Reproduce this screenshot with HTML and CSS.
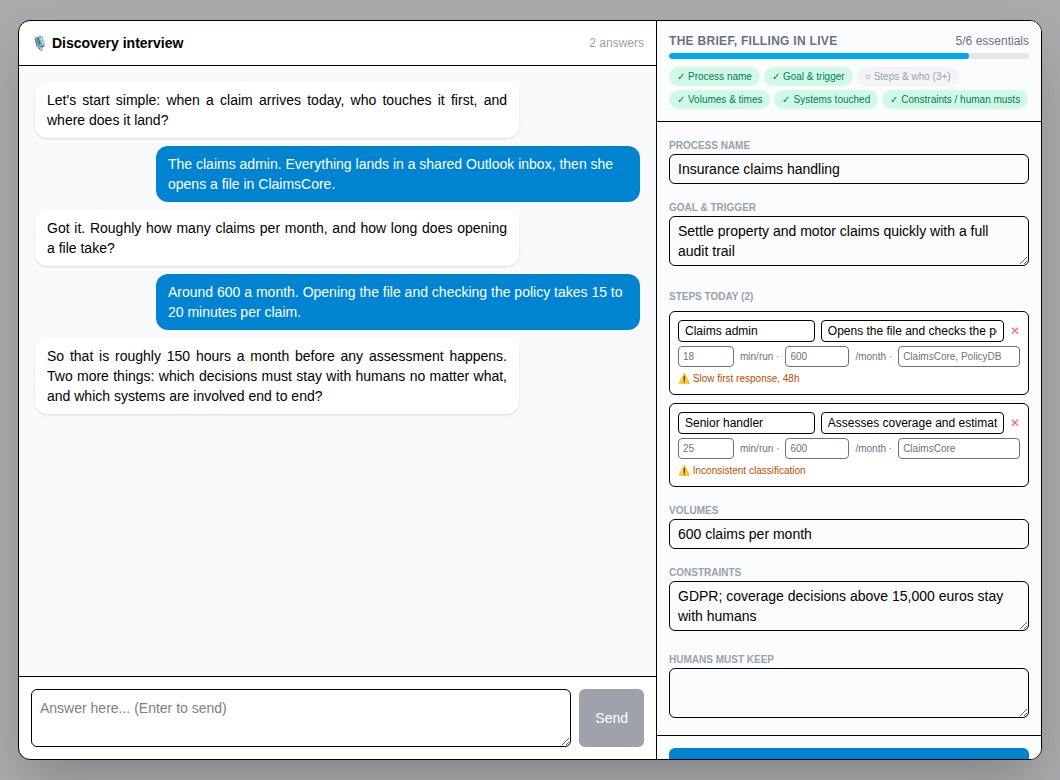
FILE: index.html
```
<!DOCTYPE html>
<html lang="en">
<head>
    <meta charset="UTF-8">
    <meta name="viewport" content="width=device-width, initial-scale=1.0">
    <title>Discovery interview</title>
    <link rel="stylesheet" href="styles.css">
</head>
<body>

<div class="overlay">
    <div class="modal">

        <section class="interview">
            <header class="interview-header">
                <h1>🎙️ Discovery interview</h1>
                <span class="count">2 answers</span>
            </header>

            <div class="chat">
                <p class="bubble bot">Let's start simple: when a claim arrives today, who touches it first, and where does it land?</p>
                <p class="bubble user">The claims admin. Everything lands in a shared Outlook inbox, then she opens a file in ClaimsCore.</p>
                <p class="bubble bot">Got it. Roughly how many claims per month, and how long does opening a file take?</p>
                <p class="bubble user">Around 600 a month. Opening the file and checking the policy takes 15 to 20 minutes per claim.</p>
                <p class="bubble bot">So that is roughly 150 hours a month before any assessment happens. Two more things: which decisions must stay with humans no matter what, and which systems are involved end to end?</p>
            </div>

            <form class="composer">
                <textarea class="field" rows="2" placeholder="Answer here... (Enter to send)" aria-label="Answer"></textarea>
                <button class="send" type="button" disabled>Send</button>
            </form>
        </section>

        <aside class="brief">
            <header class="brief-header">
                <div class="brief-title">
                    <h2>The brief, filling in live</h2>
                    <span>5/6 essentials</span>
                </div>
                <div class="progress"><div class="progress-bar"></div></div>
                <div class="chips">
                    <span class="chip done"><span>✓</span> Process name</span>
                    <span class="chip done"><span>✓</span> Goal &amp; trigger</span>
                    <span class="chip"><span>○</span> Steps &amp; who (3+)</span>
                    <span class="chip done"><span>✓</span> Volumes &amp; times</span>
                    <span class="chip done"><span>✓</span> Systems touched</span>
                    <span class="chip done"><span>✓</span> Constraints / human musts</span>
                </div>
            </header>

            <div class="brief-body">
                <div class="group">
                    <label for="name">Process name</label>
                    <input class="field" id="name" type="text" value="Insurance claims handling">
                </div>
                <div class="group group-area">
                    <label for="goal">Goal &amp; trigger</label>
                    <textarea class="field" id="goal" rows="2">Settle property and motor claims quickly with a full audit trail</textarea>
                </div>

                <div class="steps">
                    <h3>Steps today (2)</h3>
                    <div class="step">
                        <div class="step-row">
                            <input class="step-who" type="text" value="Claims admin" aria-label="Who">
                            <input class="step-what" type="text" value="Opens the file and checks the policy" aria-label="What">
                            <button class="remove" type="button" aria-label="Remove step">✕</button>
                        </div>
                        <div class="step-row meta">
                            <input class="minutes" id="min1" type="text" value="18">
                            <label for="min1">min/run ·</label>
                            <input class="runs" id="runs1" type="text" value="600">
                            <label for="runs1">/month ·</label>
                            <input class="systems" type="text" value="ClaimsCore, PolicyDB" aria-label="Systems">
                        </div>
                        <p class="pain">⚠️ Slow first response, 48h</p>
                    </div>
                    <div class="step">
                        <div class="step-row">
                            <input class="step-who" type="text" value="Senior handler" aria-label="Who">
                            <input class="step-what" type="text" value="Assesses coverage and estimates" aria-label="What">
                            <button class="remove" type="button" aria-label="Remove step">✕</button>
                        </div>
                        <div class="step-row meta">
                            <input class="minutes" id="min2" type="text" value="25">
                            <label for="min2">min/run ·</label>
                            <input class="runs" id="runs2" type="text" value="600">
                            <label for="runs2">/month ·</label>
                            <input class="systems" type="text" value="ClaimsCore" aria-label="Systems">
                        </div>
                        <p class="pain">⚠️ Inconsistent classification</p>
                    </div>
                </div>

                <div class="group">
                    <label for="volumes">Volumes</label>
                    <input class="field" id="volumes" type="text" value="600 claims per month">
                </div>
                <div class="group group-area">
                    <label for="constraints">Constraints</label>
                    <textarea class="field" id="constraints" rows="2">GDPR; coverage decisions above 15,000 euros stay with humans</textarea>
                </div>
                <div class="group group-area">
                    <label for="humans">Humans must keep</label>
                    <textarea class="field" id="humans" rows="2"></textarea>
                </div>
            </div>

            <footer class="brief-footer">
                <button class="primary" type="button" aria-label="Use this brief"></button>
            </footer>
        </aside>

    </div>
</div>

</body>
</html>
```
FILE: styles.css
```
* {
    box-sizing: border-box;
    margin: 0;
    padding: 0;
}
body {
    background: #a9aaab;
    color: #000;
    font-family: "Liberation Sans", Arial, sans-serif;
    font-size: 14px;
    line-height: 20px;
}
input, textarea, button {
    font: inherit;
    color: inherit;
    background: transparent;
    border: 1px solid;
    min-width: 0;
}
button {
    border: 0;
}
::placeholder {
    color: #808080;
}
.overlay {
    height: 100vh;
    padding: 20px 16px;
    display: flex;
    justify-content: center;
}
.modal {
    width: 100%;
    max-width: 1024px;
    display: flex;
    overflow: hidden;
    background: #fff;
    border: 1px solid #000;
    border-radius: 12px;
    box-shadow: 0 25px 50px -12px rgba(0, 0, 0, 0.25);
}

/* interview */
.interview {
    flex: 1;
    min-width: 0;
    display: flex;
    flex-direction: column;
    border-right: 1px solid #000;
}
.interview-header {
    display: flex;
    justify-content: space-between;
    align-items: center;
    padding: 12px;
    border-bottom: 1px solid #000;
}
h1 {
    font-size: 14px;
}
.count {
    font-size: 12px;
    line-height: 16px;
    color: #99a1af;
}
.chat {
    flex: 1;
    min-height: 0;
    overflow: auto;
    display: flex;
    flex-direction: column;
    gap: 8px;
    padding: 16px;
    background: #f9fafc;
}
.bubble {
    max-width: 80%;
    padding: 8px 12px;
    border-radius: 12px;
}
.bot {
    align-self: flex-start;
    text-align: justify;
    background: #fff;
    box-shadow: 0 1px 3px rgba(0, 0, 0, 0.1), 0 1px 2px -1px rgba(0, 0, 0, 0.1);
}
.user {
    align-self: flex-end;
    background: #0084d1;
    color: #fff;
}
.composer {
    display: flex;
    gap: 8px;
    padding: 12px;
    border-top: 1px solid #000;
}
.field {
    display: block;
    width: 100%;
    padding: 4px 8px;
    border-radius: 6px;
}
.composer .field {
    flex: 1;
    padding: 8px;
}
.send {
    padding: 0 16px;
    border-radius: 6px;
    background: #9fa2aa;
    color: #fff;
}

/* brief */
.brief {
    flex: none;
    width: 384px;
    overflow: hidden;
    background: #fbfcfe;
}
.brief-header {
    padding: 12px;
    border-bottom: 1px solid #000;
}
.brief-title {
    display: flex;
    justify-content: space-between;
    margin-bottom: 4px;
    font-size: 12px;
    line-height: 16px;
    color: #6a7282;
}
h2 {
    font-size: 12px;
    letter-spacing: 0.025em;
    text-transform: uppercase;
}
.progress {
    height: 6px;
    margin-bottom: 8px;
    border-radius: 3px;
    overflow: hidden;
    background: #e5e7eb;
}
.progress-bar {
    width: 83.33%;
    height: 100%;
    border-radius: 3px;
    background: #00a6f4;
}
.chips {
    display: flex;
    flex-wrap: wrap;
    gap: 4px;
}
.chip {
    display: flex;
    gap: 3px;
    height: 19px;
    padding: 2px 8px;
    border-radius: 10px;
    font-size: 10px;
    line-height: 15px;
    background: #f3f4f6;
    color: #99a1af;
}
.chip.done {
    background: #d0fae5;
    color: #007a55;
}
.brief-body {
    display: flex;
    flex-direction: column;
    gap: 12px;
    padding: 12px;
}
.group label, h3 {
    display: block;
    padding: 4px 0 1px;
    font-size: 10px;
    font-weight: bold;
    line-height: 15px;
    text-transform: uppercase;
    color: #99a1af;
}
.group-area {
    padding-bottom: 5px;
}
.steps {
    display: flex;
    flex-direction: column;
    gap: 8px;
}
h3 {
    padding: 8px 0 0;
    line-height: 12px;
}
.step {
    display: flex;
    flex-direction: column;
    gap: 4px;
    padding: 8px;
    border: 1px solid #000;
    border-radius: 6px;
    background: #fff;
}
.step-row {
    display: flex;
    align-items: center;
    gap: 6px;
    font-size: 12px;
    line-height: 16px;
}
.step-row input {
    padding: 2px 6px;
    border-radius: 4px;
}
.step-who {
    width: 40%;
}
.step-what, .systems {
    flex: 1;
}
.remove {
    color: #ff6467;
}
.step-row.meta {
    font-size: 10px;
    line-height: 15px;
    color: #6a7282;
}
.meta input {
    padding: 2px 4px;
}
.minutes {
    width: 56px;
}
.runs {
    width: 64px;
}
.pain {
    font-size: 10px;
    line-height: 15px;
    color: #bb4d00;
}
.brief-footer {
    padding: 12px;
    border-top: 1px solid #000;
}
.primary {
    display: block;
    width: 100%;
    height: 36px;
    border-radius: 6px;
    background: #0084d1;
}
```
